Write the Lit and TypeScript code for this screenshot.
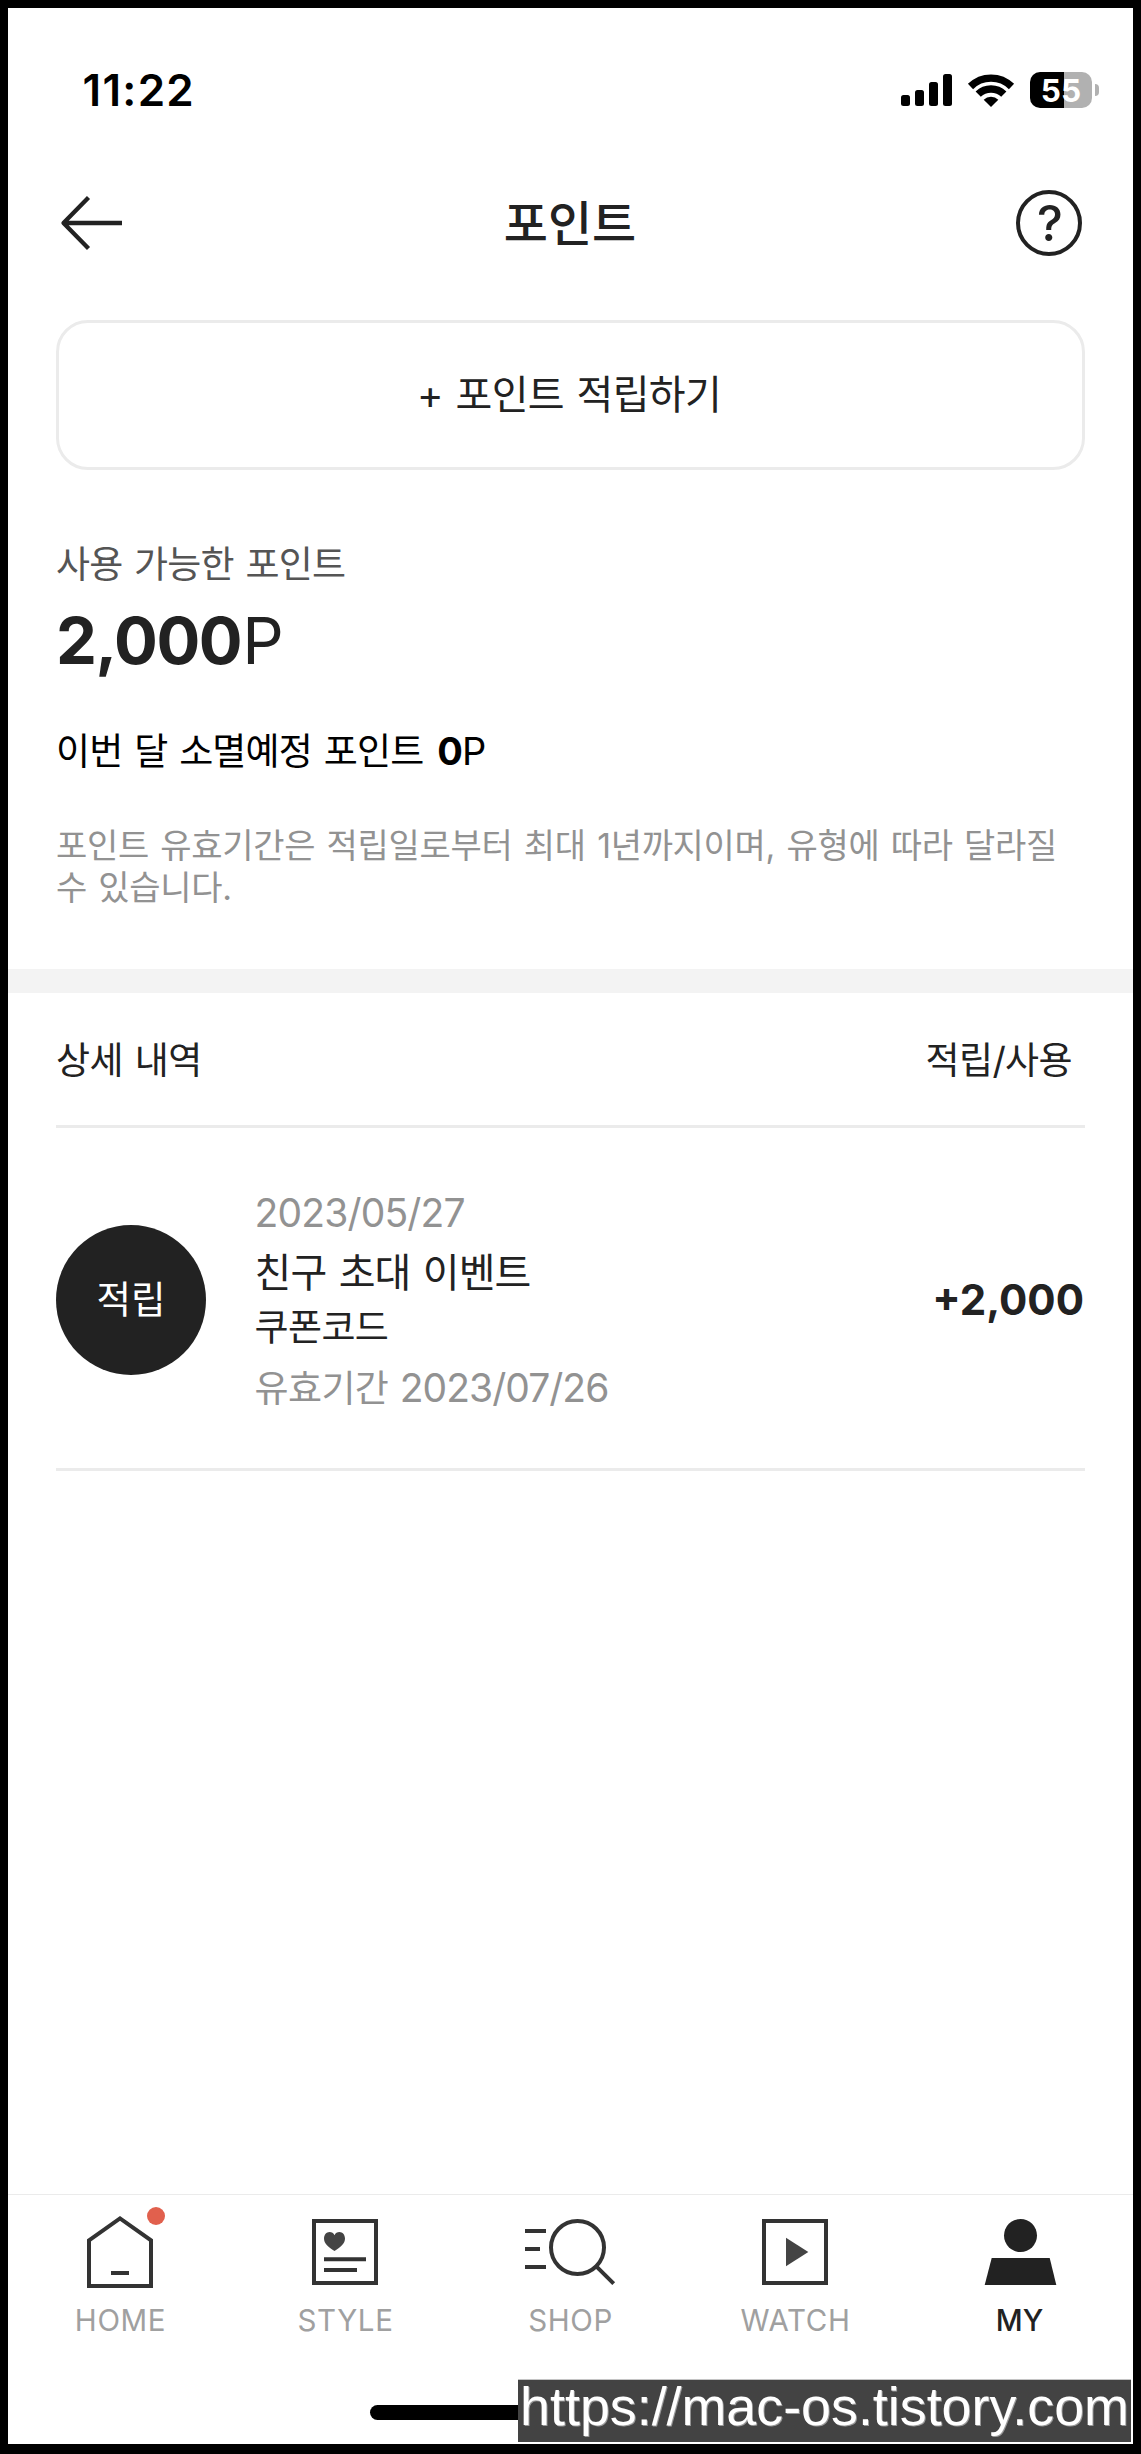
import { LitElement, html, css, svg } from "lit";
import { customElement } from "lit/decorators.js";

const icons: Record<string, unknown> = {
  HOME: svg`<path class="line" d="M14 24.300 45 2.400 76 24.300V70H14Z"/><path class="line" d="M36 57h18"/><circle class="dot" cx="81" cy="0" r="9"/>`,
  STYLE: svg`<path class="line" d="M14 5h62v62H14ZM24 43.200h42M24 54h33"/><path class="soft" d="M34.500 35C28 31 24 27.300 24 22.500 24 18.800 26.500 16 29.500 16 31.800 16 33.600 17.200 34.500 19.200 35.400 17.200 37.200 16 39.500 16 42.500 16 45 18.800 45 22.500 45 27.300 41 31 34.500 35Z"/>`,
  SHOP: svg`<path class="line" d="M0 15h21M0 33h15M0 51h21"/><circle class="line" cx="52.500" cy="31.500" r="26.500"/><path class="line" d="M71.300 50.300 88.700 67.700"/>`,
  WATCH: svg`<path class="line" d="M14 5h62v62H14Z"/><path class="soft" d="M36 21.700 58.300 36 36 50.300Z"/>`,
  MY: svg`<circle class="solid" cx="45.500" cy="19.500" r="16.500"/><path class="solid" d="M16.700 42h58L81.300 69H9.700Z"/>`,
};

@customElement("app-root")
export class AppRoot extends LitElement {
  static styles = css`
    :host { display: block; }
    * { box-sizing: border-box; }
    .frame { display: flex; flex-direction: column; position: relative; width: 1141px; height: 2454px; border: 8px solid #000; border-bottom-width: 10px; background: #fff; color: #222; font-family: Inter, "Noto Sans CJK KR", sans-serif; white-space: nowrap; }
    svg { display: block; overflow: visible; flex: none; }
    .status { height: 130px; flex: none; display: flex; align-items: center; justify-content: space-between; padding: 34px 34px 0 74.5px; color: #000; }
    .time { font-size: 44px; font-weight: 600; line-height: 60px; letter-spacing: 1.3px; }
    .signals { display: flex; align-items: center; gap: 16px; }
    .battery { display: flex; align-items: center; gap: 3px; }
    .cell { width: 62px; height: 36px; border-radius: 10px; background: linear-gradient(90deg, #000 34px, #b1b1b1 34px); color: #fff; font-size: 31.5px; font-weight: 700; line-height: 38px; text-align: center; }
    .tip { width: 4px; height: 12px; border-radius: 0 5px 5px 0; background: #b1b1b1; }
    .bar { height: 182px; flex: none; display: grid; grid-template-columns: 66px 1fr 66px; align-items: center; padding: 0 51px 12px 48px; }
    .title { text-align: center; font-size: 48px; font-weight: 500; line-height: 66px; padding: 2px 0 0 2px; }
    .help { width: 66px; height: 66px; border: 4px solid #222; border-radius: 50%; text-align: center; font-size: 49px; font-weight: 500; line-height: 59px; padding-left: 2px; }
    .earn { height: 150px; flex: none; margin: 0 48px; padding: 0 3px 6px 0; border: 3px solid #ebebeb; border-radius: 32px; display: flex; align-items: center; justify-content: center; font-size: 40px; letter-spacing: -0.7px; word-spacing: 2.2px; }
    .summary { height: 499px; flex: none; padding: 63px 48px 0; }
    .label { font-size: 37px; line-height: 63px; letter-spacing: -0.8px; word-spacing: 2px; color: #555; }
    .total { font-size: 65px; line-height: 92px; margin-top: -1px; }
    .total b { font-weight: 700; letter-spacing: -1.4px; }
    .total span { margin-left: 1px; }
    .expiring { font-size: 37px; line-height: 60px; margin-top: 34px; letter-spacing: -0.8px; word-spacing: 2.1px; color: #000; }
    .expiring b { font-size: 38px; font-weight: 700; margin-left: 2px; }
    .expiring .unit { font-size: 38px; }
    .note { font-size: 34px; line-height: 42px; margin-top: 43px; letter-spacing: -0.3px; word-spacing: 2.1px; color: #929292; }
    .band { height: 24px; flex: none; background: #f3f3f3; }
    .heading { height: 135px; flex: none; margin: 0 48px; padding: 0 13px 2px 0; border-bottom: 3px solid #ebebeb; display: flex; align-items: center; justify-content: space-between; font-size: 37px; letter-spacing: -0.6px; word-spacing: 2px; }
    .entry { height: 343px; flex: none; margin: 0 48px; padding-top: 4px; border-bottom: 3px solid #ebebeb; display: flex; align-items: center; gap: 48.5px; }
    .badge { width: 150px; height: 150px; border-radius: 50%; background: #222; color: #fff; font-size: 37.5px; line-height: 149px; text-align: center; flex: none; }
    .details { flex: 1; display: flex; flex-direction: column; padding-top: 2px; }
    .date { font-size: 39px; line-height: 60px; letter-spacing: -0.83px; color: #929292; margin-top: -1px; }
    .event { font-size: 40px; line-height: 60px; letter-spacing: -0.9px; word-spacing: 2px; }
    .code { font-size: 37px; line-height: 56px; letter-spacing: -0.6px; margin: -3px 0 2px; }
    .until { font-size: 37px; line-height: 60px; letter-spacing: -0.6px; color: #929292; }
    .until .day { font-size: 39px; letter-spacing: -0.95px; margin-left: 1.6px; }
    .amount { font-size: 42px; font-weight: 700; padding: 0 1px 2px 0; }
    .tabs { height: 142px; flex: none; margin-top: auto; border-top: 1px solid #ebebeb; display: grid; grid-template-columns: repeat(5, 225px); }
    .tab { display: flex; flex-direction: column; align-items: center; padding-top: 21px; color: #a0a0a0; font-size: 29.5px; }
    .tab.active { color: #222; font-weight: 500; }
    .tab-label { line-height: 40px; margin-top: 12px; letter-spacing: 0.6px; }
    .tab.active .tab-label { letter-spacing: 0; padding-right: 2px; }
    .line { fill: none; stroke: #333; stroke-width: 4; }
    .soft { fill: #444; }
    .solid { fill: #222; }
    .dot { fill: #e1604d; }
    .foot { height: 108px; flex: none; padding: 69px 0 0 362px; }
    .grip { width: 401px; height: 15px; border-radius: 8px; background: #000; }
    .watermark { position: absolute; right: 2px; bottom: 2px; width: 613px; height: 63px; border-top: 1px solid #c4c4c4; background: #434343; color: #fff; font-family: "Liberation Sans", Arial, sans-serif; font-size: 53.8px; line-height: 52px; text-align: center; text-shadow: 1px 1px 0 #999; }
  `;

  render() {
    return html`<main class="frame">
      <div class="status">
        <span class="time">11:22</span>
        <div class="signals">
          <svg width="51" height="32" viewBox="0 0 51 32"><rect y="21" width="9" height="11" rx="2.500"/><rect x="14" y="16" width="9" height="16" rx="2.500"/><rect x="28" y="8" width="9" height="24" rx="2.500"/><rect x="42" width="9" height="32" rx="2.500"/></svg>
          <svg width="46" height="33" viewBox="0 0 46 33"><path d="M2.500 12.500a29.200 29.200 0 0 1 41 0M10.200 20.200a18.200 18.200 0 0 1 25.600 0" fill="none" stroke="#000" stroke-width="7.400"/><path d="M23 33 15.700 25.700a10.400 10.400 0 0 1 14.600 0Z"/></svg>
          <div class="battery"><div class="cell">55</div><div class="tip"></div></div>
        </div>
      </div>
      <header class="bar">
        <svg width="66" height="54" viewBox="0 0 66 54"><path d="M66 27H7M32.500 1.500 7.500 27 32.500 52.500" fill="none" stroke="#222" stroke-width="4.300" stroke-linejoin="round"/></svg>
        <div class="title">포인트</div>
        <div class="help">?</div>
      </header>
      <div class="earn"><span>+ 포인트 적립하기</span></div>
      <section class="summary">
        <div class="label">사용 가능한 포인트</div>
        <div class="total"><b>2,000</b><span>P</span></div>
        <div class="expiring"><span>이번 달 소멸예정 포인트 </span><b>0</b><span class="unit">P</span></div>
        <div class="note"><div>포인트 유효기간은 적립일로부터 최대 1년까지이며, 유형에 따라 달라질</div><div>수 있습니다.</div></div>
      </section>
      <div class="band"></div>
      <div class="heading"><span>상세 내역</span><span>적립/사용</span></div>
      <article class="entry">
        <div class="badge">적립</div>
        <div class="details">
          <div class="date">2023/05/27</div>
          <div class="event">친구 초대 이벤트</div>
          <div class="code">쿠폰코드</div>
          <div class="until"><span>유효기간 </span><span class="day">2023/07/26</span></div>
        </div>
        <div class="amount">+2,000</div>
      </article>
      <nav class="tabs">
        ${Object.entries(icons).map(([name, icon]) => html`<div class="tab ${name === "MY" ? "active" : ""}"><svg width="91" height="72" viewBox="0 0 91 72">${icon}</svg><span class="tab-label">${name}</span></div>`)}
      </nav>
      <div class="foot"><div class="grip"></div></div>
      <div class="watermark"><span>https://mac-os.tistory.com</span></div>
    </main>`;
  }
}
